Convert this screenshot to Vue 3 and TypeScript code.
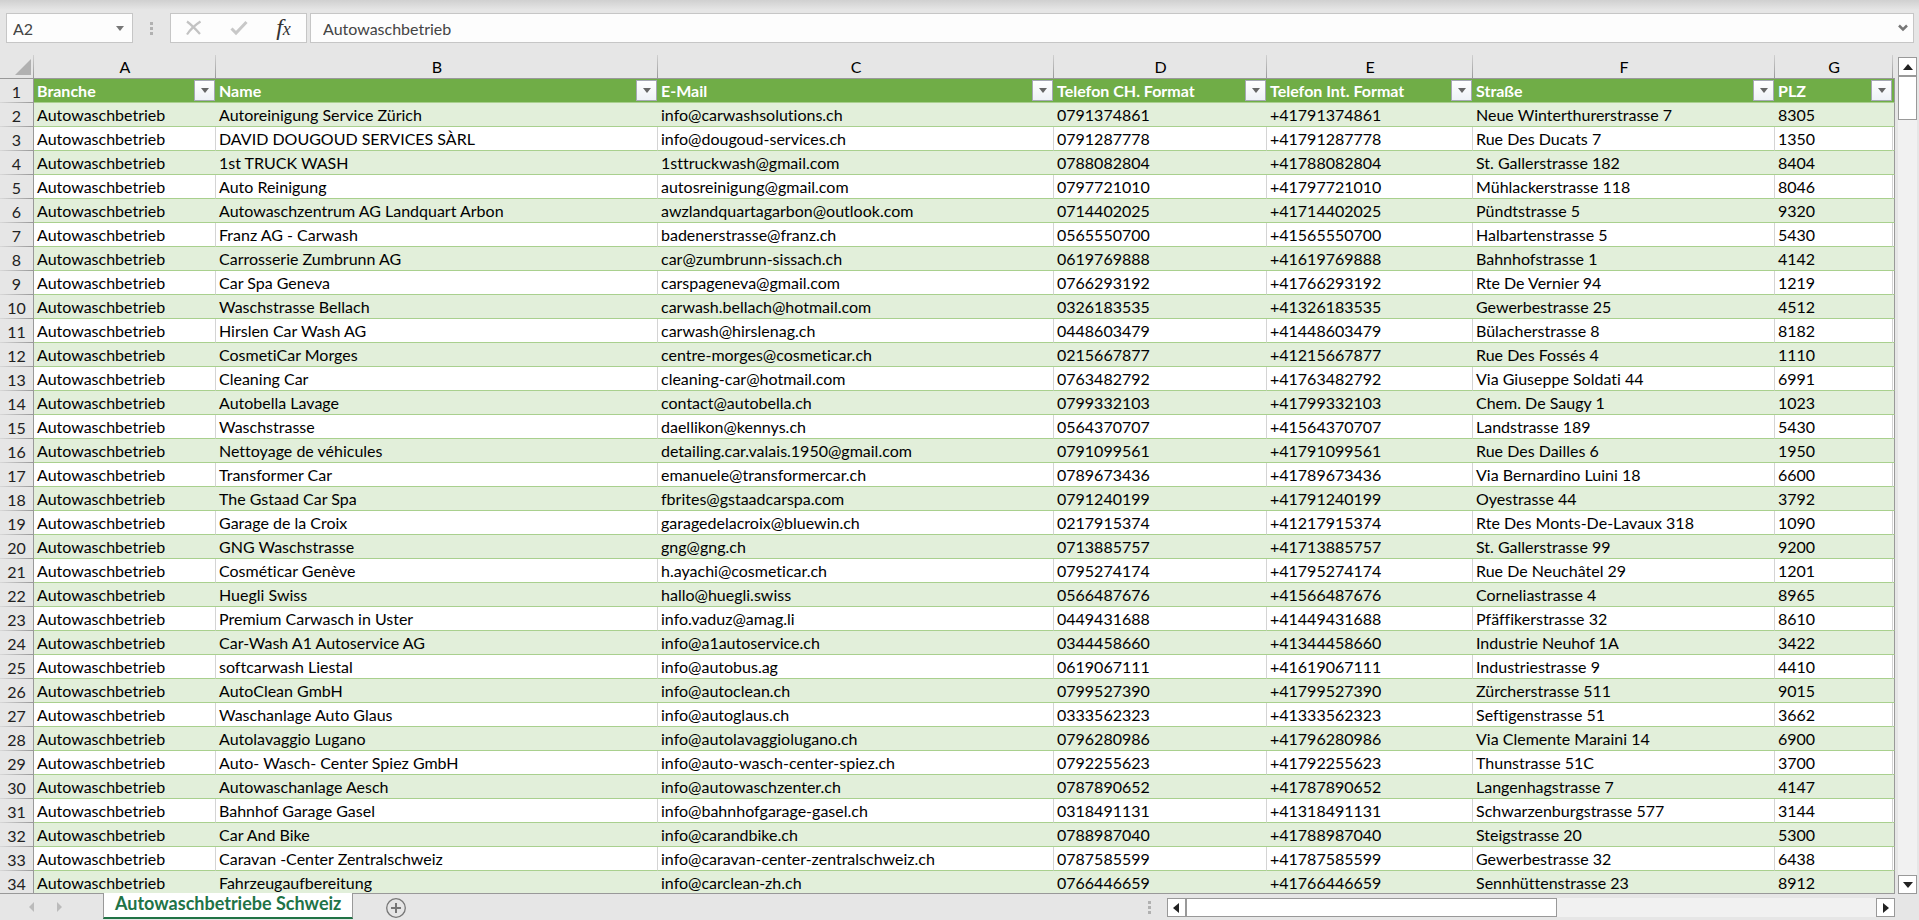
<script setup lang="ts">
import { ref } from 'vue'

type Row = [string, string, string, string, string]

const columns = [
  { letter: 'A', title: 'Branche' },
  { letter: 'B', title: 'Name' },
  { letter: 'C', title: 'E-Mail' },
  { letter: 'D', title: 'Telefon CH. Format' },
  { letter: 'E', title: 'Telefon Int. Format' },
  { letter: 'F', title: 'Straße' },
  { letter: 'G', title: 'PLZ' },
]

const industry = 'Autowaschbetrieb'

// name, e-mail, subscriber number without prefix, street, postcode
const rows: Row[] = [
  ['Autoreinigung Service Zürich', 'info@carwashsolutions.ch', '791374861', 'Neue Winterthurerstrasse 7', '8305'],
  ['DAVID DOUGOUD SERVICES SÀRL', 'info@dougoud-services.ch', '791287778', 'Rue Des Ducats 7', '1350'],
  ['1st TRUCK WASH', '1sttruckwash@gmail.com', '788082804', 'St. Gallerstrasse 182', '8404'],
  ['Auto Reinigung', 'autosreinigung@gmail.com', '797721010', 'Mühlackerstrasse 118', '8046'],
  ['Autowaschzentrum AG Landquart Arbon', 'awzlandquartagarbon@outlook.com', '714402025', 'Pündtstrasse 5', '9320'],
  ['Franz AG - Carwash', 'badenerstrasse@franz.ch', '565550700', 'Halbartenstrasse 5', '5430'],
  ['Carrosserie Zumbrunn AG', 'car@zumbrunn-sissach.ch', '619769888', 'Bahnhofstrasse 1', '4142'],
  ['Car Spa Geneva', 'carspageneva@gmail.com', '766293192', 'Rte De Vernier 94', '1219'],
  ['Waschstrasse Bellach', 'carwash.bellach@hotmail.com', '326183535', 'Gewerbestrasse 25', '4512'],
  ['Hirslen Car Wash AG', 'carwash@hirslenag.ch', '448603479', 'Bülacherstrasse 8', '8182'],
  ['CosmetiCar Morges', 'centre-morges@cosmeticar.ch', '215667877', 'Rue Des Fossés 4', '1110'],
  ['Cleaning Car', 'cleaning-car@hotmail.com', '763482792', 'Via Giuseppe Soldati 44', '6991'],
  ['Autobella Lavage', 'contact@autobella.ch', '799332103', 'Chem. De Saugy 1', '1023'],
  ['Waschstrasse', 'daellikon@kennys.ch', '564370707', 'Landstrasse 189', '5430'],
  ['Nettoyage de véhicules', 'detailing.car.valais.1950@gmail.com', '791099561', 'Rue Des Dailles 6', '1950'],
  ['Transformer Car', 'emanuele@transformercar.ch', '789673436', 'Via Bernardino Luini 18', '6600'],
  ['The Gstaad Car Spa', 'fbrites@gstaadcarspa.com', '791240199', 'Oyestrasse 44', '3792'],
  ['Garage de la Croix', 'garagedelacroix@bluewin.ch', '217915374', 'Rte Des Monts-De-Lavaux 318', '1090'],
  ['GNG Waschstrasse', 'gng@gng.ch', '713885757', 'St. Gallerstrasse 99', '9200'],
  ['Cosméticar Genève', 'h.ayachi@cosmeticar.ch', '795274174', 'Rue De Neuchâtel 29', '1201'],
  ['Huegli Swiss', 'hallo@huegli.swiss', '566487676', 'Corneliastrasse 4', '8965'],
  ['Premium Carwasch in Uster', 'info.vaduz@amag.li', '449431688', 'Pfäffikerstrasse 32', '8610'],
  ['Car-Wash A1 Autoservice AG', 'info@a1autoservice.ch', '344458660', 'Industrie Neuhof 1A', '3422'],
  ['softcarwash Liestal', 'info@autobus.ag', '619067111', 'Industriestrasse 9', '4410'],
  ['AutoClean GmbH', 'info@autoclean.ch', '799527390', 'Zürcherstrasse 511', '9015'],
  ['Waschanlage Auto Glaus', 'info@autoglaus.ch', '333562323', 'Seftigenstrasse 51', '3662'],
  ['Autolavaggio Lugano', 'info@autolavaggiolugano.ch', '796280986', 'Via Clemente Maraini 14', '6900'],
  ['Auto- Wasch- Center Spiez GmbH', 'info@auto-wasch-center-spiez.ch', '792255623', 'Thunstrasse 51C', '3700'],
  ['Autowaschanlage Aesch', 'info@autowaschzenter.ch', '787890652', 'Langenhagstrasse 7', '4147'],
  ['Bahnhof Garage Gasel', 'info@bahnhofgarage-gasel.ch', '318491131', 'Schwarzenburgstrasse 577', '3144'],
  ['Car And Bike', 'info@carandbike.ch', '788987040', 'Steigstrasse 20', '5300'],
  ['Caravan -Center Zentralschweiz', 'info@caravan-center-zentralschweiz.ch', '787585599', 'Gewerbestrasse 32', '6438'],
  ['Fahrzeugaufbereitung', 'info@carclean-zh.ch', '766446659', 'Sennhüttenstrasse 23', '8912'],
]

const cellRef = ref('A2')
const cellValue = ref(industry)
</script>

<template>
  <div class="app">
    <header class="formula-bar">
      <div class="name-box">
        <input v-model="cellRef" type="text" aria-label="Namenfeld" />
        <button type="button" aria-label="Namen anzeigen">
          <svg width="8" height="5" viewBox="0 0 8 5"><path d="M0 0h8L4 5z" fill="#777" /></svg>
        </button>
      </div>
      <span class="grip"><i></i><i></i><i></i></span>
      <div class="actions">
        <button type="button" aria-label="Abbrechen">
          <svg width="18" height="16" viewBox="0 0 18 16"><path d="M2 1.500C6 4.500 11 9.500 15 14M15.500 1.500C10 5 5 10 2 14.500" fill="none" stroke="#c3c3c3" stroke-width="2.200" /></svg>
        </button>
        <button type="button" aria-label="Eingeben">
          <svg width="18" height="16" viewBox="0 0 18 16"><path d="M1.500 8.500L6 13L16.500 2" fill="none" stroke="#c8c8c8" stroke-width="3" /></svg>
        </button>
        <button type="button" class="fx" aria-label="Funktion einfügen"><span>f</span><small>x</small></button>
      </div>
      <div class="formula">
        <input v-model="cellValue" type="text" aria-label="Bearbeitungsleiste" />
        <button type="button" aria-label="Bearbeitungsleiste erweitern">
          <svg width="10" height="8" viewBox="0 0 10 8"><path d="M1 1.500L5 5.500L9 1.500" fill="none" stroke="#777" stroke-width="2.500" /></svg>
        </button>
      </div>
    </header>

    <main class="workspace">
      <div class="sheet">
        <table>
          <colgroup>
            <col class="w-num" /><col class="w-a" /><col class="w-b" /><col class="w-c" /><col class="w-d" />
            <col class="w-e" /><col class="w-f" /><col class="w-g" /><col />
          </colgroup>
          <thead>
            <tr class="letters">
              <th class="corner"><svg width="16" height="16" viewBox="0 0 16 16"><path d="M16 0v16H0z" fill="#b1b1b1" /></svg></th>
              <th v-for="c in columns" :key="c.letter" scope="col">{{ c.letter }}</th>
              <th class="rest"></th>
            </tr>
            <tr class="titles">
              <th class="num" scope="row">1</th>
              <th v-for="c in columns" :key="c.title" scope="col">
                <div class="title">
                  <span>{{ c.title }}</span>
                  <button type="button" :aria-label="c.title + ' filtern'">
                    <svg width="8" height="5" viewBox="0 0 8 5"><path d="M0 0h8L4 5z" fill="#666" /></svg>
                  </button>
                </div>
              </th>
              <th class="rest"></th>
            </tr>
          </thead>
          <tbody>
            <tr v-for="(r, i) in rows" :key="i">
              <th class="num" scope="row">{{ i + 2 }}</th>
              <td>{{ industry }}</td>
              <td>{{ r[0] }}</td>
              <td>{{ r[1] }}</td>
              <td>0{{ r[2] }}</td>
              <td>+41{{ r[2] }}</td>
              <td>{{ r[3] }}</td>
              <td>{{ r[4] }}</td>
              <td class="rest"></td>
            </tr>
          </tbody>
        </table>
      </div>
      <div class="vscroll">
        <button type="button" aria-label="Nach oben">
          <svg width="10" height="6" viewBox="0 0 10 6"><path d="M5 0l5 6H0z" fill="#222" /></svg>
        </button>
        <div class="thumb"></div>
        <div class="track"></div>
        <button type="button" aria-label="Nach unten">
          <svg width="10" height="6" viewBox="0 0 10 6"><path d="M0 0h10L5 6z" fill="#222" /></svg>
        </button>
      </div>
    </main>

    <footer class="bottom">
      <nav class="tabs">
        <button type="button" class="step" aria-label="Vorheriges Blatt">
          <svg width="5" height="10" viewBox="0 0 5 10"><path d="M5 0v10L0 5z" fill="#bbb" /></svg>
        </button>
        <button type="button" class="step" aria-label="Nächstes Blatt">
          <svg width="5" height="10" viewBox="0 0 5 10"><path d="M0 0v10l5-5z" fill="#bbb" /></svg>
        </button>
        <button type="button" class="tab">Autowaschbetriebe Schweiz</button>
        <button type="button" class="add" aria-label="Neues Blatt">
          <svg width="20" height="20" viewBox="0 0 20 20" fill="none" stroke="#777">
            <circle cx="10" cy="10" r="9.300" stroke-width="1.300" />
            <path d="M10 5v10M5 10h10" stroke-width="2" />
          </svg>
        </button>
      </nav>
      <span class="grip"><i></i><i></i><i></i></span>
      <div class="hscroll">
        <button type="button" aria-label="Nach links">
          <svg width="6" height="10" viewBox="0 0 6 10"><path d="M6 0v10L0 5z" fill="#222" /></svg>
        </button>
        <div class="thumb"></div>
        <div class="track"></div>
        <button type="button" aria-label="Nach rechts">
          <svg width="6" height="10" viewBox="0 0 6 10"><path d="M0 0v10l6-5z" fill="#222" /></svg>
        </button>
      </div>
    </footer>
  </div>
</template>

<style>
body {
  margin: 0;
  overflow: hidden;
}
</style>

<style scoped>
.app {
  display: flex;
  flex-direction: column;
  height: 100vh;
  background: #e6e6e6;
  color: #000;
  font: 16px/23px Lato, "Noto Sans", sans-serif;
  font-variant-ligatures: none;
}
.app * {
  box-sizing: border-box;
}
button {
  display: flex;
  align-items: center;
  justify-content: center;
  flex: none;
  margin: 0;
  padding: 0;
  border: 0;
  background: none;
  font: inherit;
  color: inherit;
}
input {
  flex: 1;
  min-width: 0;
  margin: 0;
  padding: 0;
  border: 0;
  outline: 0;
  background: none;
  color: #444;
  font: inherit;
}
svg {
  display: block;
  flex: none;
}

.formula-bar {
  display: flex;
  flex: none;
  height: 55px;
  padding: 13px 5px 12px 6px;
  background: linear-gradient(#d0d0d0, #e6e6e6 10px);
}
.name-box,
.actions,
.formula {
  display: flex;
  border: 1px solid #c6c6c6;
  background: #fdfdfd;
}
.name-box {
  width: 127px;
  padding-left: 6px;
}
.name-box button {
  width: 24px;
}
.grip {
  display: flex;
  flex-direction: column;
  align-items: center;
  justify-content: center;
  gap: 2px;
}
.grip i {
  width: 3px;
  height: 3px;
  background: #b1b1b1;
}
.formula-bar .grip {
  width: 37px;
}
.actions {
  width: 137px;
}
.actions button {
  flex: 1;
}
.actions .fx {
  align-items: baseline;
  color: #333;
  font: italic 24px/26px "Liberation Serif", serif;
}
.fx small {
  font-size: 18px;
}
.formula {
  flex: 1;
  margin-left: 3px;
  padding-left: 12px;
}
.formula button {
  width: 20px;
}

.workspace {
  display: flex;
  flex: 1;
  min-height: 0;
}
.sheet {
  flex: 1;
  min-width: 0;
  overflow: hidden;
  border-bottom: 1px solid #999;
}
table {
  width: 100%;
  table-layout: fixed;
  border-collapse: separate;
  border-spacing: 0;
}
.w-num { width: 34px; }
.w-a { width: 182px; }
.w-b { width: 442px; }
.w-c { width: 396px; }
.w-d { width: 213px; }
.w-e { width: 206px; }
.w-f { width: 302px; }
.w-g { width: 118px; }
th,
td {
  height: 24px;
  padding: 0 0 0 3px;
  overflow: hidden;
  text-align: left;
  white-space: nowrap;
}
.letters th {
  padding: 0;
  border-bottom: 1px solid #999;
  background: linear-gradient(#d0d0d0, #999) right / 1px 100% no-repeat;
  font-weight: 400;
  text-align: center;
}
.letters .corner svg {
  margin: 0 3px 0 auto;
}
.letters .rest {
  background: none;
}
.num,
.titles .num {
  padding: 0;
  border-right: 1px solid #999;
  border-bottom: 0;
  background: linear-gradient(90deg, #d8d8d8, #999) bottom / 100% 1px no-repeat;
  color: #222;
  font-weight: 400;
  text-align: center;
}
.titles th {
  border-bottom: 1px solid #a9d08e;
  background-color: #70ad47;
  color: #fff;
  font-weight: 700;
}
.titles .num {
  border-bottom: 0;
  background-color: #e6e6e6;
  color: #222;
  font-weight: 400;
}
.title {
  display: flex;
  justify-content: space-between;
}
.title button {
  width: 21px;
  height: 21px;
  margin-top: 1px;
  margin-right: 1px;
  border: 1px solid #a6a8b4;
  background: linear-gradient(#fff, #eef1f6);
}
td {
  border-bottom: 1px solid #a9d08e;
  background: #fff;
}
tr:nth-child(odd) td {
  background: #e2efda;
}
tr:nth-child(even) td {
  border-right: 1px solid #d4d4d4;
}
.titles .rest,
td.rest {
  padding: 0;
  border-right: 1px solid #999;
}
tbody tr:nth-child(n) td.rest {
  border-right: 1px solid #999;
}

.vscroll {
  display: flex;
  flex: none;
  flex-direction: column;
  width: 24px;
  padding: 2px 2px 0 3px;
}
.vscroll button {
  height: 19px;
  border: 1px solid #999;
  background: #fff;
}
.vscroll .thumb {
  height: 44px;
  border: 1px solid #999;
  background: #fff;
}
.track {
  flex: 1;
  background: #f1f1f1;
}

.bottom {
  display: flex;
  flex: none;
  height: 26px;
}
.tabs {
  display: flex;
  flex: 1;
  align-items: flex-start;
  padding-left: 17px;
}
.step {
  width: 28px;
  height: 26px;
}
.tab {
  height: 26px;
  margin-top: -1px;
  margin-left: 30px;
  padding: 0 11px 3px;
  border: 1px solid #999;
  border-top: 0;
  border-bottom: 2px solid #217346;
  background: #fff;
  color: #217346;
  font-size: 18px;
  font-weight: 700;
}
.add {
  margin: 4px 0 0 33px;
}
.bottom .grip {
  width: 34px;
}
.hscroll {
  display: flex;
  width: calc(38% - 1px);
  height: 19px;
  margin-top: 4px;
  margin-right: 24px;
}
.hscroll button {
  width: 19px;
  border: 1px solid #999;
  background: #fff;
}
.hscroll .thumb {
  width: 51%;
  border: 1px solid #999;
  background: #fff;
}
</style>
